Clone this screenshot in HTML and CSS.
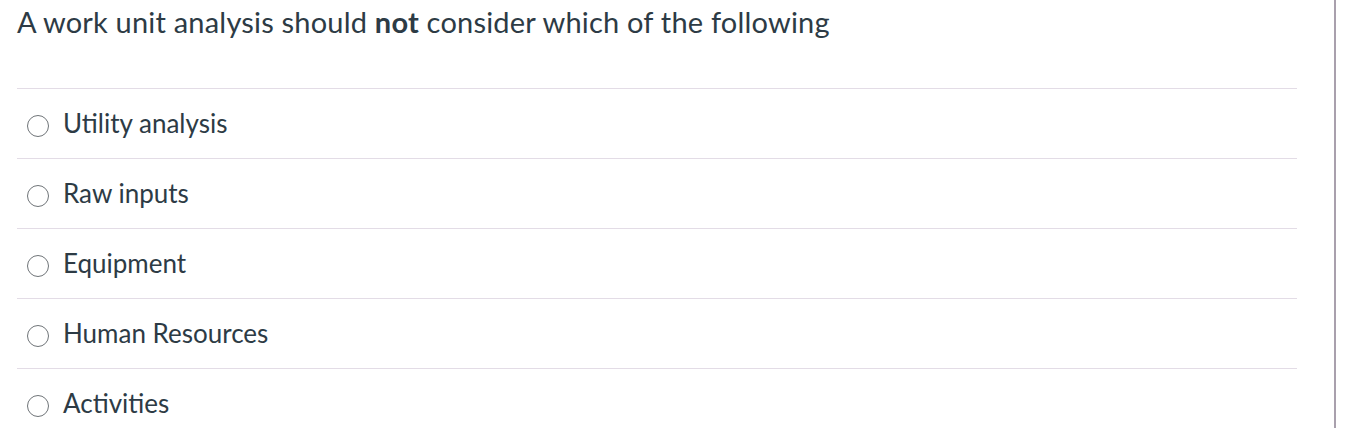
FILE: index.html
```html
<!DOCTYPE html>
<html>
<head>
<meta charset="utf-8">
<link rel="stylesheet" href="styles.css">
</head>
<body>
<div class="page">
  <div class="question">
    <div class="q-text">A work unit analysis should <strong>not</strong> consider which of the following</div>
    <div class="answers">
      <div class="answer"><span class="radio"></span><span class="label">Utility analysis</span></div>
      <div class="answer"><span class="radio"></span><span class="label">Raw inputs</span></div>
      <div class="answer"><span class="radio"></span><span class="label">Equipment</span></div>
      <div class="answer"><span class="radio"></span><span class="label">Human Resources</span></div>
      <div class="answer"><span class="radio"></span><span class="label">Activities</span></div>
    </div>
  </div>
  <div class="side"></div>
</div>
</body>
</html>
```
FILE: styles.css
```css
html, body {
  margin: 0;
  padding: 0;
  background: #ffffff;
}
body {
  font-family: Lato, "Open Sans", sans-serif;
  color: #2d3b45;
  overflow: hidden;
}
.page {
  display: flex;
  height: 428px;
}
.question {
  width: 1280px;
  margin-left: 17px;
  flex: none;
}
.q-text {
  font-size: 29px;
  line-height: 35px;
  padding-top: 4px;
  height: 89px;
  box-sizing: border-box;
  border-bottom: 1px solid #e3dce6;
  letter-spacing: 0.2px;
}
.q-text strong {
  font-weight: 700;
}
.answer {
  display: flex;
  align-items: center;
  height: 70px;
  box-sizing: border-box;
  border-bottom: 1px solid #e3dce6;
  padding-left: 10px;
  padding-bottom: 2px;
}
.radio {
  width: 20px;
  height: 20px;
  border: 1.5px solid #6f7478;
  border-radius: 50%;
  flex: none;
  box-sizing: content-box;
  margin-top: 6px;
}
.label {
  font-size: 26px;
  margin-left: 14px;
}
.side {
  margin-left: 37px;
  width: 2px;
  background: #a9a0ad;
  height: 428px;
  flex: none;
}
```
